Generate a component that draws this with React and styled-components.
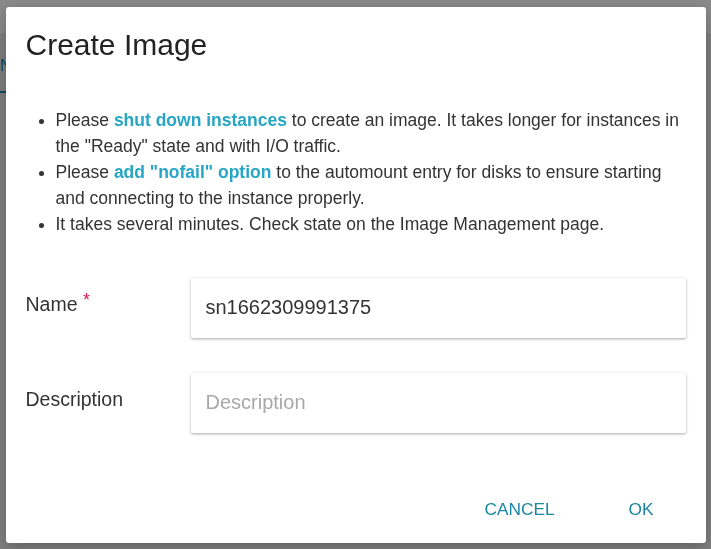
import styled, { createGlobalStyle } from 'styled-components';

const GlobalStyle = createGlobalStyle`
    html, body {
        margin: 0;
        padding: 0;
        width: 100%;
        height: 100%;
        overflow: hidden;
    }
    body {
        font-family: "Liberation Sans", Arial, sans-serif;
        background: #ebebeb;
    }
`;

const App = () => {
    return (
        <>
            <GlobalStyle />
            <Page>
                <TopBar />
                <TabRow>
                    <Tab>N</Tab>
                </TabRow>
            </Page>

            <Backdrop>
                <Dialog>
                    <Title>Create Image</Title>

                    <NoticeList>
                        <li>
                            Please <Strong>shut down instances</Strong> to create an image. It takes longer for instances in the "Ready" state and with I/O traffic.
                        </li>
                        <li>
                            Please <Strong>add "nofail" option</Strong> to the automount entry for disks to ensure starting and connecting to the instance properly.
                        </li>
                        <li>It takes several minutes. Check state on the Image Management page.</li>
                    </NoticeList>

                    <Form>
                        <FieldRow>
                            <Label>
                                Name <Required>*</Required>
                            </Label>
                            <Input defaultValue="sn1662309991375" />
                        </FieldRow>
                        <FieldRow>
                            <Label>Description</Label>
                            <Input placeholder="Description" />
                        </FieldRow>
                    </Form>

                    <Actions>
                        <TextButton>CANCEL</TextButton>
                        <TextButton>OK</TextButton>
                    </Actions>
                </Dialog>
            </Backdrop>
        </>
    );
};

export default App;

const Page = styled.div`
    display: flex;
    flex-direction: column;
    height: 100vh;
`;

const TopBar = styled.div`
    height: 33px;
    background: #ffffff;
`;

const TabRow = styled.div`
    display: flex;
    height: 60px;
    align-items: flex-end;
`;

const Tab = styled.div`
    color: #1a86a0;
    font-size: 16px;
    padding: 0 8px 16px 0;
    border-bottom: 2px solid #1a86a0;
`;

const Backdrop = styled.div`
    position: fixed;
    inset: 0;
    background: rgba(0, 0, 0, 0.46);
    display: flex;
    align-items: center;
    justify-content: center;
`;

const Dialog = styled.div`
    width: 700px;
    height: 536px;
    background: #ffffff;
    border-radius: 3px;
    box-shadow: 0 4px 16px rgba(0, 0, 0, 0.25);
    box-sizing: border-box;
    padding: 20px 20px 0 20px;
    display: flex;
    flex-direction: column;
    color: #333333;
`;

const Title = styled.h2`
    margin: 0;
    font-size: 30px;
    font-weight: 400;
    line-height: 36px;
    color: #222222;
`;

const NoticeList = styled.ul`
    margin: 44px 0 0 0;
    padding: 0 0 0 30px;
    font-size: 17.5px;
    line-height: 26px;
    color: #333333;
`;

const Strong = styled.span`
    color: #26a6c4;
    font-weight: 700;
`;

const Form = styled.div`
    display: flex;
    flex-direction: column;
    gap: 35px;
    margin-top: 41px;
`;

const FieldRow = styled.div`
    display: flex;
    align-items: flex-start;
`;

const Label = styled.div`
    width: 165px;
    flex-shrink: 0;
    font-size: 19.5px;
    line-height: 24px;
    padding-top: 14px;
    color: #333333;
`;

const Required = styled.span`
    color: #e8194f;
    font-size: 18px;
    line-height: 18px;
    vertical-align: top;
    position: relative;
    top: -1px;
`;

const Input = styled.input`
    flex: 1;
    height: 60px;
    box-sizing: border-box;
    border: none;
    outline: none;
    border-radius: 2px;
    background: #ffffff;
    box-shadow: 0 1px 3px rgba(0, 0, 0, 0.35);
    padding: 0 15px;
    font-family: "Liberation Sans", Arial, sans-serif;
    font-size: 20px;
    color: #333333;

    &::placeholder {
        color: #a8a8a8;
    }
`;

const Actions = styled.div`
    display: flex;
    justify-content: flex-end;
    gap: 40px;
    margin-top: auto;
    margin-bottom: 16px;
    padding-right: 15px;
`;

const TextButton = styled.button`
    border: none;
    background: transparent;
    font-family: "Liberation Sans", Arial, sans-serif;
    font-size: 17.3px;
    color: #1a86a0;
    padding: 8px 17px;
    line-height: 20px;
    cursor: pointer;
`;
